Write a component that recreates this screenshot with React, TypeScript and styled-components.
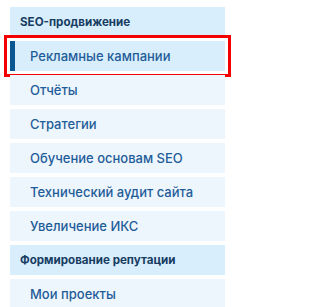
import * as React from "react";
import styled, { createGlobalStyle } from "styled-components";

const GlobalStyle = createGlobalStyle`
  html, body {
    margin: 0;
    padding: 0;
    background: #ffffff;
  }
  body {
    font-family: Inter, "Open Sans", "Liberation Sans", sans-serif;
  }
`;

interface Section {
  title: string;
  items: string[];
}

const SECTIONS: Section[] = [
  {
    title: "SEO-продвижение",
    items: [
      "Рекламные кампании",
      "Отчёты",
      "Стратегии",
      "Обучение основам SEO",
      "Технический аудит сайта",
      "Увеличение ИКС",
    ],
  },
  {
    title: "Формирование репутации",
    items: ["Мои проекты"],
  },
];

const ACTIVE = "Рекламные кампании";

const Root = styled.nav`
  display: flex;
  flex-direction: column;
  gap: 4px;
  width: 215px;
  padding: 7px 10px 0 10px;
`;

const Header = styled.div`
  display: flex;
  align-items: center;
  height: 30px;
  padding-left: 10px;
  background: #d9eefc;
  color: #173d63;
  font-size: 11.6px;
  font-weight: 700;
`;

const Item = styled.a<{ $active?: boolean }>`
  position: relative;
  display: flex;
  align-items: center;
  height: 30px;
  padding-left: 20px;
  background: ${(p) => (p.$active ? "#d9eefc" : "#eef6fd")};
  color: #1f5d99;
  font-size: 13px;
  font-weight: 500;
  text-decoration: none;
  outline: ${(p) => (p.$active ? "3px solid #f40000" : "none")};
  outline-offset: 3px;
  cursor: pointer;

  &::before {
    content: "";
    display: ${(p) => (p.$active ? "block" : "none")};
    position: absolute;
    left: 0;
    top: 0;
    bottom: 0;
    width: 5px;
    background: #0b5791;
  }
`;

const App: React.FC = () => {
  return (
    <>
      <GlobalStyle />
      <Root>
        {SECTIONS.map((section) => (
          <React.Fragment key={section.title}>
            <Header>{section.title}</Header>
            {section.items.map((item) => (
              <Item key={item} $active={item === ACTIVE}>
                {item}
              </Item>
            ))}
          </React.Fragment>
        ))}
      </Root>
    </>
  );
};

export default App;
